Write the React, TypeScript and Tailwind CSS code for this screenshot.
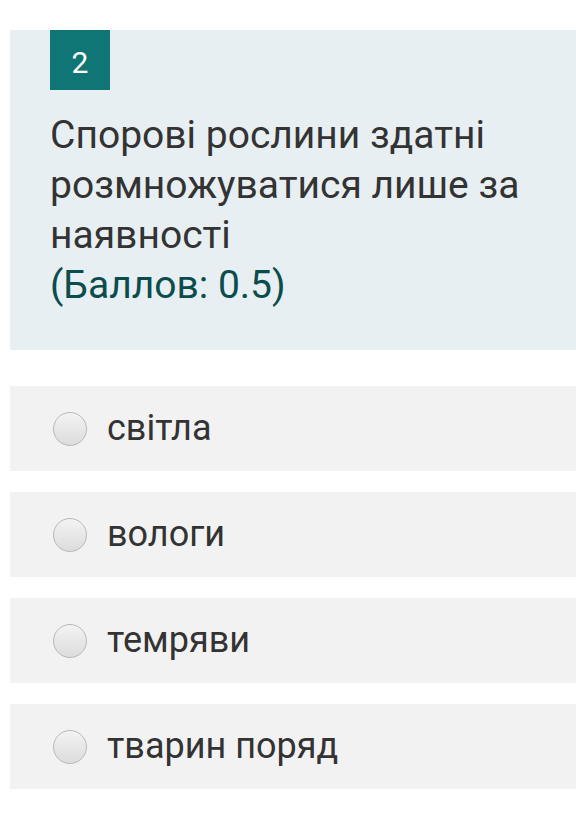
export default function App() {
  const options = ["світла", "вологи", "темряви", "тварин поряд"];
  return (
    <div className="min-h-[839px] w-[576px] bg-white pt-[30px] font-['Roboto',sans-serif]">
      <div className="ml-[10px] bg-[#e7eff2] pb-[40px] pl-[40px] pr-[20px]">
        <div className="flex h-[60px] w-[60px] items-center justify-center bg-[#0f7575] pt-[4px] text-[30px] text-white">
          2
        </div>
        <div className="mt-[20px] text-[39px] leading-[50px] text-[#333333]">
          Спорові рослини здатні розмножуватися лише за наявності
          <div className="text-[#0b4c4c]">(Баллов: 0.5)</div>
        </div>
      </div>
      <div className="ml-[10px] mt-[36px] flex flex-col gap-[21px]">
        {options.map((o) => (
          <label key={o} className="flex h-[85px] items-center bg-[#f2f2f2] pl-[43px]">
            <span className="h-[34px] w-[34px] rounded-full border border-[#b9b9b9] bg-gradient-to-b from-[#f3f3f3] to-[#dcdcdc]" />
            <span className="ml-[20px] pb-[1px] text-[36px] text-[#333333]">{o}</span>
          </label>
        ))}
      </div>
    </div>
  );
}
